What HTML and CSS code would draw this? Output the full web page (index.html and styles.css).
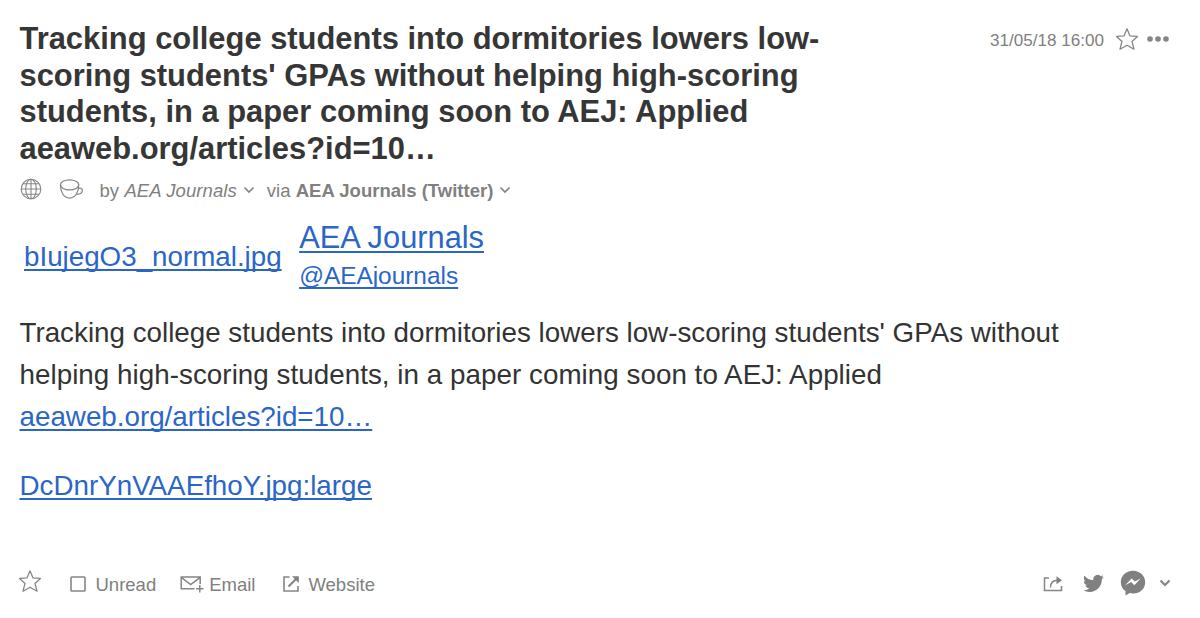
FILE: index.html
```html
<!DOCTYPE html>
<html lang="en">
<head>
<meta charset="utf-8">
<title>AEA Journals</title>
<link rel="stylesheet" href="styles.css">
</head>
<body>
<article class="article">
  <header class="header">
    <h1 class="title">Tracking college students into dormitories lowers low-<br>scoring students' GPAs without helping high-scoring<br>students, in a paper coming soon to AEJ: Applied<br>aeaweb.org/articles?id=10…</h1>
    <div class="status">
      <time class="date">31/05/18 16:00</time>
      <svg class="star" viewBox="0 0 24 24"><path d="M12 1.800 15 8.900l7.400.5-5.400 5 2 7.800-7-4-7 4 2-7.800-5.400-5 7.400-.5z"/></svg>
      <svg class="dots" viewBox="0 0 22 6"><circle cx="3" cy="3" r="2.800"/><circle cx="11" cy="3" r="2.800"/><circle cx="19" cy="3" r="2.800"/></svg>
    </div>
  </header>

  <div class="meta">
    <svg class="globe" viewBox="0 0 22 22"><circle cx="11" cy="11" r="9.800"/><ellipse cx="11" cy="11" rx="5.300" ry="9.800"/><path d="M11 1.200v19.600M1.200 11h19.600M2.800 5.700h16.400M2.800 16.300h16.400"/></svg>
    <svg class="cup" viewBox="0 0 26 22"><ellipse cx="11" cy="6.700" rx="9.500" ry="5.300"/><path d="M1.500 6.700C1.500 14.500 5 20.400 11 20.400S20.500 14.500 20.500 6.700M20 10.600c2-1.300 4.300-.3 4.300 2 0 2.600-2.600 4.200-6 3.600"/></svg>
    <span class="by">by <em class="author">AEA Journals</em></span>
    <svg class="chevron" viewBox="0 0 12 8"><path d="M1.500 1.500 6 6l4.500-4.500"/></svg>
    <span class="via">via <b class="source">AEA Journals (Twitter)</b></span>
    <svg class="chevron" viewBox="0 0 12 8"><path d="M1.500 1.500 6 6l4.500-4.500"/></svg>
  </div>

  <div class="profile">
    <a class="avatar" href="#">bIujegO3_normal.jpg</a>
    <div class="names">
      <a class="name" href="#">AEA Journals</a>
      <a class="handle" href="#">@AEAjournals</a>
    </div>
  </div>

  <p class="text">Tracking college students into dormitories lowers low-scoring students' GPAs without<br><span class="second">helping high-scoring students, in a paper coming soon to AEJ: Applied</span><br><a class="url" href="#">aeaweb.org/articles?id=10…</a></p>
  <p class="text"><a class="photo" href="#">DcDnrYnVAAEfhoY.jpg:large</a></p>

  <footer class="footer">
    <svg class="star" viewBox="0 0 24 24"><path d="M12 1.800 15 8.900l7.400.5-5.400 5 2 7.800-7-4-7 4 2-7.800-5.400-5 7.400-.5z"/></svg>
    <span class="action unread"><svg class="box" viewBox="0 0 16 16"><rect x="1" y="1" width="14" height="14" rx=".8"/></svg>Unread</span>
    <span class="action email"><svg class="mail" viewBox="0 0 24 18"><path d="M14.500 13.800H1.200V2h19v7M1.200 2.300l9.500 7.200 9.500-7.200M19.800 10v7.500M16 13.800h7.500"/></svg>Email</span>
    <span class="action website"><svg class="open" viewBox="0 0 18 18"><path d="M7.500 2H2v14h14v-5"/><path class="shaft" d="M6.500 11.500 14 4"/><path class="solid" d="M10 1.200h6.800V8z"/></svg>Website</span>
    <span class="share">
      <svg class="export" viewBox="0 0 20 17"><path d="M6 3H1.500v12.500h17V11M7.500 12.500C7.500 7 10 5.200 14.500 5.200"/><path class="solid" d="M13.500 1.200 19 5.200l-5.500 4z"/></svg>
      <svg class="bird" viewBox="0 0 24 24"><path d="M23.950 4.570a10 10 0 0 1-2.820.770 4.960 4.960 0 0 0 2.160-2.720c-.95.550-2 .95-3.130 1.180a4.920 4.920 0 0 0-8.380 4.480C7.690 8.090 4.070 6.130 1.640 3.160a4.820 4.820 0 0 0-.67 2.480c0 1.710.87 3.210 2.190 4.100a4.900 4.900 0 0 1-2.230-.62v.06a4.920 4.920 0 0 0 3.950 4.830 5 5 0 0 1-2.210.08 4.940 4.940 0 0 0 4.600 3.420A9.870 9.870 0 0 1 0 19.540a13.990 13.990 0 0 0 7.550 2.210c9.050 0 14-7.500 14-13.980 0-.21 0-.42-.02-.63a9.940 9.940 0 0 0 2.420-2.570z"/></svg>
      <svg class="messenger" viewBox="0 0 26 26"><path fill-rule="evenodd" d="M13 .8C6 .8.800 5.800.800 12.200c0 3.700 1.700 6.800 4.700 8.900v4.300l4.200-2.300c1 .3 2.100.4 3.300.4 7 0 12.200-4.900 12.200-11.300S20 .8 13 .8zM5.200 15.200l6.500-6.800 3.200 3.100 5.900-3.100-6.500 6.800-3.100-3.200z"/></svg>
      <svg class="chevron more" viewBox="0 0 12 8"><path d="M1.500 1.500 6 6l4.500-4.500"/></svg>
    </span>
  </footer>
</article>
</body>
</html>
```
FILE: styles.css
```css
* { box-sizing: border-box; }
body {
  margin: 0;
  background: #fff;
  color: #333;
  font-family: "Liberation Sans", Arial, sans-serif;
}
.article {
  display: flex;
  flex-direction: column;
  height: 618px;
  padding: 20px 29px 0 19.500px;
  white-space: nowrap;
}
.header { display: flex; justify-content: space-between; height: 148px; }
.title { margin: 0; padding-top: 1px; font-size: 30.900px; line-height: 36.600px; font-weight: bold; color: #363636; }
.status { display: flex; align-items: center; height: 40px; margin-right: 2px; color: #808080; }
.date { font-size: 17.100px; padding-top: 2px; }
svg { display: block; flex: none; fill: none; stroke: #858585; stroke-width: 1.300; }
.star { width: 24px; height: 24px; stroke-linejoin: round; }
.status .star { margin: -2px 0 0 11px; }
.dots { width: 22px; height: 6px; margin: -2px 0 0 8px; fill: #858585; stroke: none; }

.meta { display: flex; align-items: center; height: 44px; font-size: 18.500px; color: #808080; }
.globe { width: 22px; height: 22px; margin-top: -2px; stroke-width: 1.100; }
.cup { width: 25px; height: 22px; margin: -2px 0 0 17px; }
.by { margin-left: 16px; letter-spacing: .08px; padding-top: 1px; }
.via { margin-left: 12px; letter-spacing: .02px; padding-top: 1px; }
.chevron { width: 12px; height: 8px; margin-left: 6px; stroke-width: 1.700; }

a { color: #2a66c8; text-decoration: underline; text-decoration-thickness: 1.500px; text-underline-offset: 2.500px; text-decoration-skip-ink: none; }
.profile { display: flex; align-items: center; height: 88px; padding: 1px 0 0 4.500px; }
.avatar { font-size: 27.750px; }
.names { display: flex; flex-direction: column; margin-left: 17.500px; }
.name { font-size: 30.800px; line-height: 38px; }
.handle { font-size: 24.400px; line-height: 38px; }

.text { margin: 12px 0 15px; font-size: 27.780px; line-height: 42px; }
.text + .text { margin: 12px 0 0; }
.second { letter-spacing: .04px; }

.footer { display: flex; align-items: center; height: 40px; margin: 57px 0 0 -1.500px; font-size: 18.500px; color: #808080; }
.footer > .star { margin-top: -6px; }
.action { display: flex; align-items: center; padding-top: 1px; }
.action svg { margin-top: -2px; }
.unread { margin-left: 28px; }
.email { margin-left: 23.500px; }
.website { margin-left: 27px; }
.box { width: 16px; height: 16px; margin-right: 9.500px; stroke-width: 1.600; }
.mail { width: 24px; height: 18px; margin-right: 5.500px; stroke-width: 1.500; }
.open { width: 18px; height: 18px; margin-right: 8px; stroke-width: 1.600; }
.open .shaft { stroke-width: 2.200; }
.solid { fill: #808080; stroke: none; }
.share { display: flex; align-items: center; margin: -2px 0 0 auto; }
.export { width: 20px; height: 17px; stroke-width: 1.500; }
.bird { width: 21px; height: 21px; margin-left: 20px; fill: #808080; stroke: none; }
.messenger { width: 26px; height: 26px; margin-left: 16px; fill: #808080; stroke: none; }
.more { margin-left: 13px; stroke-width: 2.200; }
```
